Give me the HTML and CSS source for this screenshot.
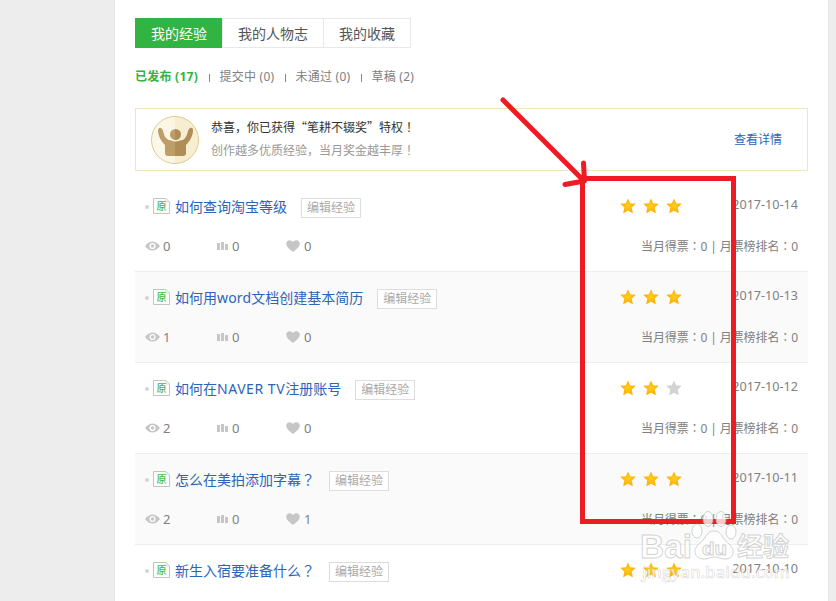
FILE: index.html
```html
<!DOCTYPE html>
<html lang="zh-CN">
<head>
<meta charset="utf-8">
<title>我的经验</title>
<link rel="stylesheet" href="styles.css">
</head>
<body>
<svg width="0" height="0" class="defs" aria-hidden="true">
  <defs>
    <radialGradient id="gold"><stop offset="0" stop-color="#ffcf18"/><stop offset="1" stop-color="#fdac08"/></radialGradient>
    <linearGradient id="cream" x2="1"><stop offset="0" stop-color="#fcf8e9"/><stop offset=".5" stop-color="#fbf6e3"/><stop offset=".5" stop-color="#f6edcf"/><stop offset="1" stop-color="#f7efd3"/></linearGradient>
    <linearGradient id="bronze" gradientUnits="userSpaceOnUse" x1="7" x2="42" y1="0" y2="0"><stop offset="0" stop-color="#bd9e69"/><stop offset=".49" stop-color="#bd9e69"/><stop offset=".49" stop-color="#ae8d57"/><stop offset="1" stop-color="#ae8d57"/></linearGradient>
  </defs>
  <symbol id="star" viewBox="0 0 16 16"><path d="M8 .4 10.2 5.2 15.7 5.8 11.8 9.6 12.8 15.2 8 12.7 3.2 15.2 4.2 9.6 .3 5.8 5.8 5.2Z"/></symbol>
  <symbol id="eye" viewBox="0 0 15 10"><path fill-rule="evenodd" d="M0 5Q3.5.4 7.5.4T15 5Q11.500 9.600 7.500 9.600T0 5ZM7.500 1.900a3.100 3.100 0 1 0 0 6.200 3.100 3.100 0 0 0 0-6.200Z"/><circle cx="7.500" cy="5" r="1.700"/></symbol>
  <symbol id="bars" viewBox="0 0 11 8"><path d="M0 1h3v7H0ZM4 0h3v8H4ZM8 2h3v6H8Z"/></symbol>
  <symbol id="heart" viewBox="0 0 14 12"><path d="M7 12C5 10 .2 7.300 .2 3.700 .2 1.500 1.800.2 3.700.2 5.200.2 6.400 1 7 2.100 7.600 1 8.800.2 10.300.2c1.900 0 3.500 1.300 3.500 3.500C13.800 7.300 9 10 7 12Z"/></symbol>
  <symbol id="page" viewBox="0 0 17 16"><path d="M.5.5H13L16.500 4V15.500H.5Z" fill="#fff" stroke="#c4c4c4"/><path d="M13 .5V4H16.500" fill="none" stroke="#ddd"/></symbol>
</svg>

<main class="panel">
  <nav class="tabs"><a class="on">我的经验</a><a>我的人物志</a><a>我的收藏</a></nav>
  <div class="filters"><b>已发布 (17)</b><i></i><span>提交中 (0)</span><i></i><span>未通过 (0)</span><i></i><span>草稿 (2)</span></div>

  <section class="notice">
    <svg class="medal" viewBox="0 0 48 48"><circle cx="24" cy="24" r="23.500" fill="url(#cream)" stroke="#ddcc95"/>
      <circle cx="24.500" cy="18.500" r="5.500" fill="url(#bronze)"/>
      <path fill="url(#bronze)" d="M7 14q1-3 3-2c3 2 2 7 5 10q2 2 5 2.500 5 2 9 0 4-.5 5-2.500c3-3 2-8 5-10q3-1 3 2c0 6-3 11-7 15v8q0 3-3 3H17q-3 0-3-3v-8C10 25 7 20 7 14Z"/></svg>
    <div class="notice-text"><p>恭喜，你已获得“笔耕不辍奖”特权<span class="mid" lang="zh-TW">！</span></p><p class="sub">创作越多优质经验，当月奖金越丰厚<span class="mid" lang="zh-TW">！</span></p></div>
    <a>查看详情</a>
  </section>

  <section class="list">
    <article>
      <div class="head"><i class="dot"></i><span class="orig"><svg><use href="#page"/></svg><em>原</em></span><a class="title">如何查询淘宝等级</a><span class="edit">编辑经验</span><span class="stars"><svg><use href="#star"/></svg><svg><use href="#star"/></svg><svg><use href="#star"/></svg></span><time>2017-10-14</time></div>
      <div class="stats"><span><svg class="eye"><use href="#eye"/></svg>0</span><span><svg class="bars"><use href="#bars"/></svg>0</span><span><svg class="heart"><use href="#heart"/></svg>0</span><p>当月得票<span class="mid" lang="zh-TW">：</span>0 | 月票榜排名<span class="mid" lang="zh-TW">：</span>0</p></div>
    </article>
    <article>
      <div class="head"><i class="dot"></i><span class="orig"><svg><use href="#page"/></svg><em>原</em></span><a class="title">如何用<span class="word">word</span>文档创建基本简历</a><span class="edit">编辑经验</span><span class="stars"><svg><use href="#star"/></svg><svg><use href="#star"/></svg><svg><use href="#star"/></svg></span><time>2017-10-13</time></div>
      <div class="stats"><span><svg class="eye"><use href="#eye"/></svg>1</span><span><svg class="bars"><use href="#bars"/></svg>0</span><span><svg class="heart"><use href="#heart"/></svg>0</span><p>当月得票<span class="mid" lang="zh-TW">：</span>0 | 月票榜排名<span class="mid" lang="zh-TW">：</span>0</p></div>
    </article>
    <article>
      <div class="head"><i class="dot"></i><span class="orig"><svg><use href="#page"/></svg><em>原</em></span><a class="title">如何在<span class="naver">NAVER TV</span>注册账号</a><span class="edit">编辑经验</span><span class="stars"><svg><use href="#star"/></svg><svg><use href="#star"/></svg><svg class="off"><use href="#star"/></svg></span><time>2017-10-12</time></div>
      <div class="stats"><span><svg class="eye"><use href="#eye"/></svg>2</span><span><svg class="bars"><use href="#bars"/></svg>0</span><span><svg class="heart"><use href="#heart"/></svg>0</span><p>当月得票<span class="mid" lang="zh-TW">：</span>0 | 月票榜排名<span class="mid" lang="zh-TW">：</span>0</p></div>
    </article>
    <article>
      <div class="head"><i class="dot"></i><span class="orig"><svg><use href="#page"/></svg><em>原</em></span><a class="title">怎么在美拍添加字幕<span class="mid" lang="zh-TW">？</span></a><span class="edit">编辑经验</span><span class="stars"><svg><use href="#star"/></svg><svg><use href="#star"/></svg><svg><use href="#star"/></svg></span><time>2017-10-11</time></div>
      <div class="stats"><span><svg class="eye"><use href="#eye"/></svg>2</span><span><svg class="bars"><use href="#bars"/></svg>0</span><span><svg class="heart"><use href="#heart"/></svg>1</span><p>当月得票<span class="mid" lang="zh-TW">：</span>0 | 月票榜排名<span class="mid" lang="zh-TW">：</span>0</p></div>
    </article>
    <article>
      <div class="head"><i class="dot"></i><span class="orig"><svg><use href="#page"/></svg><em>原</em></span><a class="title">新生入宿要准备什么<span class="mid" lang="zh-TW">？</span></a><span class="edit">编辑经验</span><span class="stars"><svg><use href="#star"/></svg><svg><use href="#star"/></svg><svg><use href="#star"/></svg></span><time>2017-10-10</time></div>
    </article>
  </section>
</main>

<svg class="overlay" viewBox="0 0 836 601">
  <g fill="none" stroke="#ed1c24" stroke-width="5">
    <path d="M582.500 178.500H733.500V521.500H582.500Z"/>
    <path d="M503 100 583 180M583.500 163 584.500 181M565 184.500 584 181" stroke-linecap="round"/>
  </g>
  <g class="mark">
    <text class="bai" x="640" y="558" font-size="34" textLength="52" lengthAdjust="spacingAndGlyphs">Bai</text>
    <ellipse cx="697" cy="531" rx="5" ry="7"/><ellipse cx="708" cy="519" rx="5" ry="7.500"/><ellipse cx="721" cy="519" rx="5" ry="7.500"/><ellipse cx="731" cy="532" rx="5" ry="7"/>
    <path d="M714 531C706 531 706 539 700 543 692 549 694 559 704 559 709 559 711 557 715 557S721 559 725 559C735 559 735 549 729 544 722 539 722 531 714 531Z"/>
    <text class="du" x="702" y="555" font-size="19" textLength="25" lengthAdjust="spacingAndGlyphs">du</text>
    <text class="zh" x="737" y="556" font-size="26" textLength="52">经验</text>
    <text class="url" x="642" y="578" font-size="16" textLength="148" lengthAdjust="spacingAndGlyphs">jingyan.baidu.com</text>
  </g>
</svg>
</body>
</html>
```
FILE: styles.css
```css
* { box-sizing: border-box; }
body {
  margin: 0;
  height: 601px;
  overflow: hidden;
  background: #ededed;
  font: 12px/18px "Noto Sans", "Noto Sans CJK SC", sans-serif;
  color: #808080;
}
p { margin: 0; }
i, em { font-style: normal; }
.defs { position: absolute; }
.mid { font-family: "Noto Sans CJK TC", sans-serif; line-height: 1; }

.panel {
  width: 713px;
  height: 601px;
  margin-left: 115px;
  padding: 18px 20px 0;
  background: #fff;
  overflow: hidden;
  box-shadow: -1px 0 #e5e5e5, 1px 0 #e5e5e5;
}

.tabs { display: flex; height: 30px; font-size: 14px; color: #555; }
.tabs a { width: 101px; text-align: center; line-height: 29px; border: 1px solid #e8e8e8; border-left: 0; }
.tabs a:nth-child(3) { width: 87px; }
.tabs .on { width: 87px; padding-left: 2px; background: #32b442; border-color: #32b442; color: #fff; }
.tabs a:nth-child(2) { width: 102px; border-left: 1px solid #e8e8e8; }

.filters { display: flex; align-items: center; height: 18px; margin-top: 20px; }
.filters b { color: #32b442; letter-spacing: .25px; width: 64px; white-space: nowrap; }
.filters span { width: 55.5px; letter-spacing: .25px; white-space: nowrap; }
.filters i { width: 1px; height: 8px; margin: 2px 10px 0 9.500px; background: #888; }

.notice {
  display: flex;
  align-items: center;
  height: 63px;
  margin-top: 22px;
  width: 673px;
  padding: 0 25px 0 15px;
  border: 1px solid #f0e6b8;
}
.medal { width: 48px; height: 48px; margin-right: 12px; }
.notice-text { flex: 1; margin-top: -3px; color: #333; line-height: 23px; font-family: "Noto Sans CJK SC", sans-serif; }
.notice-text .sub { color: #999; }
.notice a { color: #2b64b8; }

.list { width: 673px; margin-top: 10px; }
article { height: 91px; padding: 15px 10px 0; border-bottom: 1px solid #eee; }
article:nth-child(even) { background: #fafafa; }
.head { display: flex; align-items: center; height: 22px; }
.dot { width: 4px; height: 4px; border-radius: 50%; background: #d4d4d4; margin-right: 4px; }
.orig { display: grid; width: 17px; height: 16px; margin: -2px 5px 0 0; }
.orig svg, .orig em { grid-area: 1 / 1; width: 17px; height: 16px; }
.orig em { font: 500 10px/16px "Noto Sans CJK SC", sans-serif; text-align: center; color: #49b83c; }
.title { height: 22px; font-size: 14px; line-height: 22px; color: #2b64b8; white-space: nowrap; }
.word { letter-spacing: .15px; }
.naver { letter-spacing: .55px; }
.edit { height: 20px; width: 60px; margin: 2px 0 0 14px; border: 1px solid #ddd; text-align: center; line-height: 18px; color: #aaa; background: #fff; }
.stars { display: flex; gap: 7px; width: 111px; margin: -2px 0 0 auto; }
.stars svg { width: 16px; height: 16px; fill: url(#gold); }
.stars .off { fill: #d3d3d3; }
time { width: 67px; margin-top: -4px; text-align: right; font-size: 12.6px; }
.stats { display: flex; align-items: center; height: 18px; margin-top: 19px; font-size: 13px; }
.stats > span { display: flex; align-items: center; width: 69px; }
.stats > span:first-child { width: 72px; }
.stats svg { fill: #c6c6c6; margin-right: 4px; }
.stats .eye { width: 15px; height: 10px; margin-right: 3px; }
.bars { width: 11px; height: 8px; }
.heart { width: 14px; height: 12px; }
.stats p { margin: 2px 0 0 auto; font-size: 12px; letter-spacing: -.1px; }

.overlay { position: absolute; inset: 0; width: 836px; height: 601px; }
.mark { fill: #fff; fill-opacity: .75; stroke: #b5b5b5; stroke-opacity: .6; stroke-width: 1; font-family: "Open Sans", sans-serif; font-weight: 700; }
.bai, .du { font-family: "Liberation Sans", sans-serif; }
.zh { font-family: "Noto Sans CJK SC", sans-serif; }
.url { stroke-width: .5; font-weight: 600; }
```
